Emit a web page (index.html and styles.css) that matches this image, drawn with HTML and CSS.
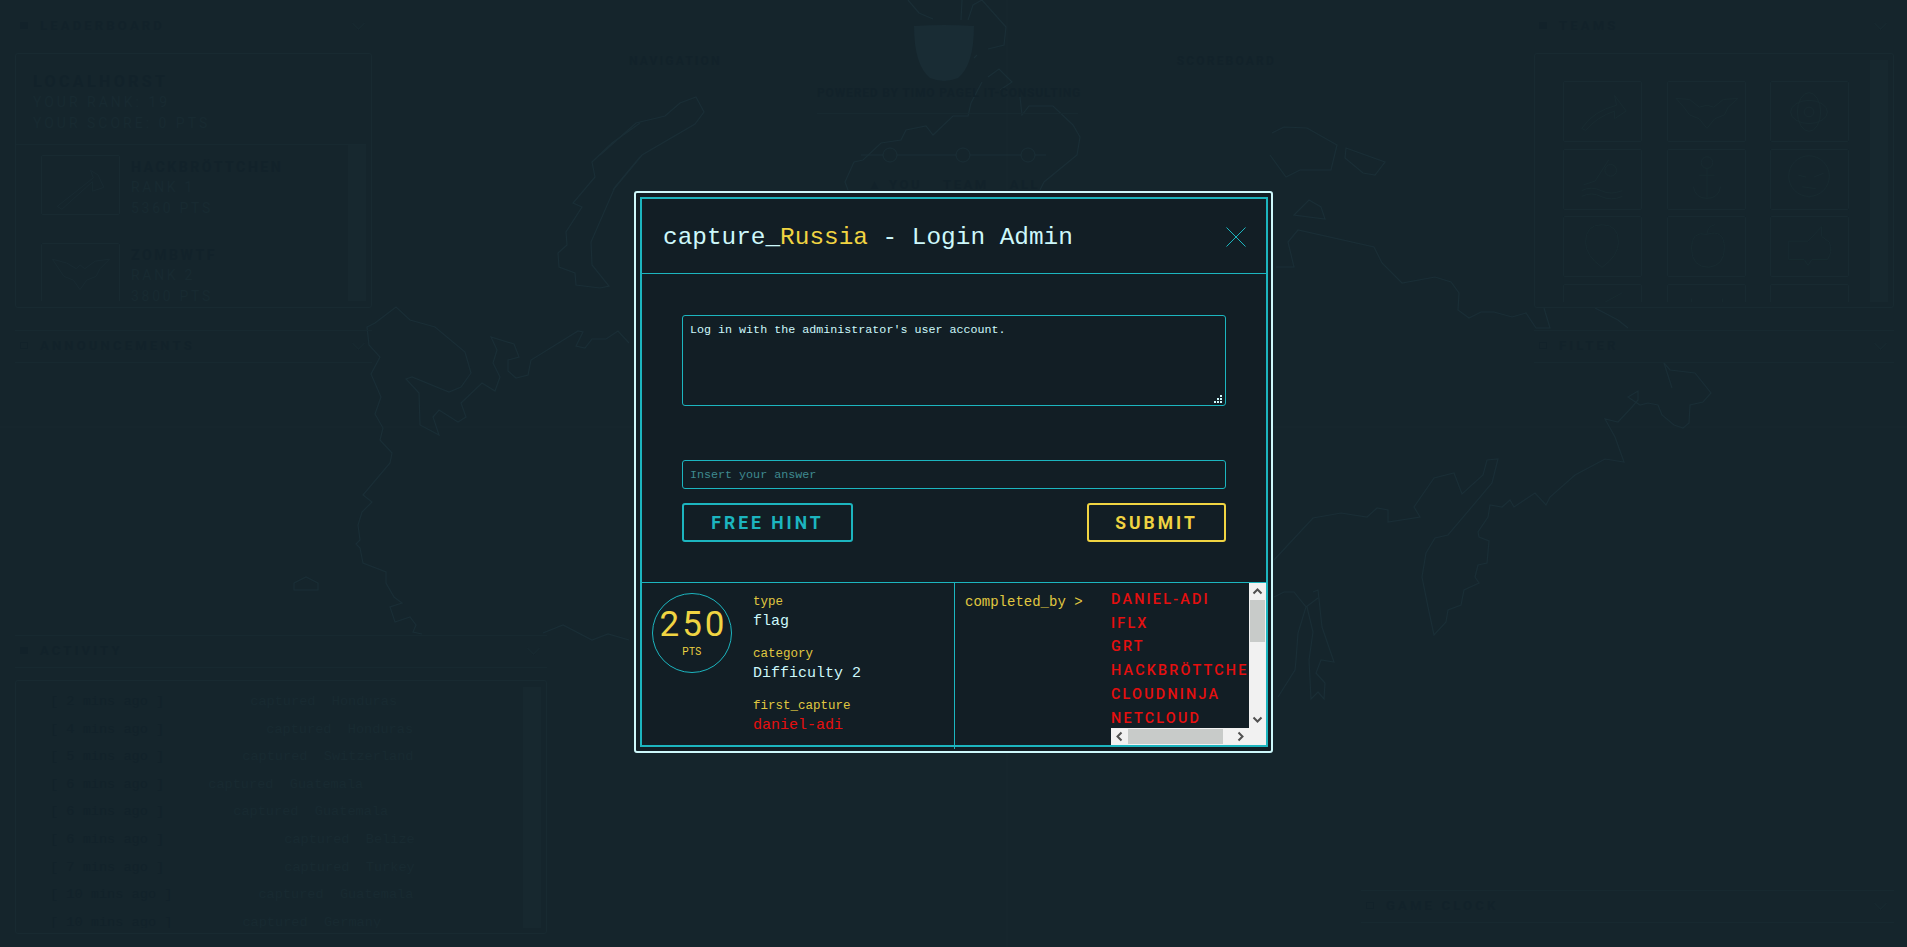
FILE: index.html
```html
<!DOCTYPE html>
<html lang="en">
<head>
<meta charset="utf-8">
<title>capture_Russia - Login Admin</title>
<link rel="stylesheet" href="styles.css">
</head>
<body>
<svg class="map" width="1907" height="947" viewBox="0 0 1907 947" aria-hidden="true">
  <path class="grid-line" d="M0 427H1907M1007 0V947"/>
  <path d="M629 343L618 331L606 339L592 339L585 348L576 346L583 332L578 331L531 360L528 375L516 378L508 371L508 360L519 357L514 344L491 337L497 350L493 363L500 377L495 391L482 383L461 403L466 417L458 422L439 410L433 417L439 435L420 425L419 393L406 379L412 377L449 392L461 387L471 373L465 352L435 327L410 320L396 307L375 323L367 327L369 345L380 357L371 374L381 397L375 414L383 428L380 440L392 453L390 463L363 495L372 502L362 512L358 525L360 540L356 544L360 548L363 563L386 572L386 583L394 597L402 603L390 607L395 622L410 617L416 625L413 632L422 634"/>
  <path d="M294 583L306 577L318 583L318 590L294 590Z"/>
  <path d="M543 633L563 625L592 640L608 634L629 640"/>
  <path d="M640 123L612 143L592 162L595 177L573 203L582 207L566 232L567 245L558 253L559 267L575 273L576 285L600 288L609 286L592 265L591 242L615 187L640 157"/>
  <path d="M600 155L636 123L665 116L680 103L696 97L704 112L695 124L642 155L613 190"/>
  <path d="M908 0L919 13L933 19M962 0L961 20M968 20L973 5L982 0L1006 27L1004 45L988 49M977 55L974 58M988 77L999 69L1012 82L1000 90"/>
  <path d="M982 82L971 103L968 116L953 116L933 135L926 126L906 130L901 140L881 143L863 160L854 162L845 182L848 190"/>
  <path d="M1020 97L1022 115L1029 106L1053 106L1073 125L1080 137L1077 155L1044 182L1040 190"/>
  <path d="M1272 133L1284 127L1307 128L1337 145L1331 170L1300 170L1286 177L1270 155"/>
  <path d="M1346 148L1385 162L1375 175L1363 173L1345 158Z"/>
  <path d="M1294 215L1309 200L1321 207L1325 219Z"/>
  <path d="M1276 267L1294 267L1288 242L1298 230L1374 247L1382 263L1402 283L1435 277L1451 282L1459 293L1458 310L1469 318L1481 312L1494 312L1512 317L1526 313L1536 328L1550 328L1544 308"/>
  <path d="M1595 308L1618 320L1628 328"/>
  <path d="M1664 363L1670 370L1695 373L1711 393L1703 402L1690 405L1689 423L1683 428L1674 425L1662 415L1658 405L1648 403L1640 405L1628 397L1638 391L1638 400L1632 407L1618 422L1605 419L1615 437L1624 462L1605 459L1575 475L1550 497L1546 505L1535 493L1514 507L1510 500L1502 507L1490 505L1488 517L1478 532L1479 537L1489 541L1487 563L1478 565L1475 577L1479 583L1464 590L1461 605L1448 610L1446 622L1434 635L1428 607L1422 577L1426 553L1435 538L1448 535L1492 483L1498 459L1487 460L1483 475L1462 494L1454 473L1434 478L1414 507L1420 517L1388 522L1388 510L1377 508L1367 517L1341 513L1313 518L1274 560"/>
  <path d="M1664 363L1672 388"/>
  <path d="M1274 597L1284 592L1294 592L1306 607L1298 633L1296 660L1295 670L1278 697"/>
  <path d="M1306 607L1318 598M1313 592L1318 590L1322 627L1334 662L1321 660L1316 673L1325 683L1324 699L1318 692L1311 699L1309 660L1313 632L1307 607"/>
</svg>

<div class="page">
  <div class="col-left">
    <div class="head head-first"><span class="mark"></span><span class="head-title">LEADERBOARD</span><span class="chev"></span></div>
    <div class="box box-lead">
      <div class="me">
        <div class="me-title">LOCALHORST</div>
        <div class="dim dim-score">YOUR RANK: 19</div>
        <div class="dim dim-score">YOUR SCORE: 0 PTS</div>
      </div>
      <div class="lead-list">
        <div class="lead-rows">
          <div class="lead-row">
            <div class="tile"><svg viewBox="0 0 79 61"><path d="M15 53L53 23L50 15L58 20L64 33L52 37L52 27L20 56Z"/></svg></div>
            <div><div class="me-name">HACKBRÖTTCHEN</div><div class="dim">RANK 1</div><div class="dim">5360 PTS</div></div>
          </div>
          <div class="lead-row">
            <div class="tile"><svg viewBox="0 0 79 61"><path d="M10 16L25 20L35 26L39 22L44 26L55 18L70 16L60 26L56 34L46 38L39 48L32 38L22 34Z"/></svg></div>
            <div><div class="me-name">ZOMBWTF</div><div class="dim">RANK 2</div><div class="dim">3800 PTS</div></div>
          </div>
        </div>
        <div class="track"></div>
      </div>
    </div>
    <div class="head head-lined"><span class="mark mark-open"></span><span class="head-title">ANNOUNCEMENTS</span><span class="chev"></span></div>
    <div class="head head-lined head-activity"><span class="mark"></span><span class="head-title">ACTIVITY</span><span class="chev"></span></div>
    <div class="box box-activity">
      <div class="act-rows">
        <div class="act-row"><span class="act-time">[ 2 mins ago ]</span><span class="act-who" style="width:86px"></span><span>captured&nbsp;&nbsp;Honduras</span></div>
        <div class="act-row"><span class="act-time">[ 4 mins ago ]</span><span class="act-who" style="width:102px"></span><span>captured&nbsp;&nbsp;Honduras</span></div>
        <div class="act-row"><span class="act-time">[ 5 mins ago ]</span><span class="act-who" style="width:78px"></span><span>captured&nbsp;&nbsp;Switzerland</span></div>
        <div class="act-row"><span class="act-time">[ 6 mins ago ]</span><span class="act-who" style="width:44px"></span><span>captured&nbsp;&nbsp;Guatemala</span></div>
        <div class="act-row"><span class="act-time">[ 6 mins ago ]</span><span class="act-who" style="width:69px"></span><span>captured&nbsp;&nbsp;Guatemala</span></div>
        <div class="act-row"><span class="act-time">[ 6 mins ago ]</span><span class="act-who" style="width:120px"></span><span>captured&nbsp;&nbsp;Belize</span></div>
        <div class="act-row"><span class="act-time">[ 7 mins ago ]</span><span class="act-who" style="width:120px"></span><span>captured&nbsp;&nbsp;Turkey</span></div>
        <div class="act-row"><span class="act-time">[ 10 mins ago ]</span><span class="act-who" style="width:86px"></span><span>captured&nbsp;&nbsp;Guatemala</span></div>
        <div class="act-row"><span class="act-time">[ 10 mins ago ]</span><span class="act-who" style="width:70px"></span><span>captured&nbsp;&nbsp;Germany</span></div>
      </div>
      <div class="track"></div>
    </div>
  </div>

  <div class="col-center">
    <div class="brand">
      <span class="brand-link">NAVIGATION</span>
      <svg class="shield" viewBox="0 0 60 57" aria-hidden="true"><path d="M0 1Q30 -1 60 1Q60 40 44 53Q30 59 16 53Q0 40 0 1Z"/></svg>
      <span class="brand-link">SCOREBOARD</span>
    </div>
    <div class="powered">POWERED BY TIMO PAGEL IT-CONSULTING</div>
    <div class="view-switch">
      <svg class="slider" viewBox="0 0 261 20" aria-hidden="true"><path d="M44 10H66M80 10H139M153 10H204M218 10H229"/><ellipse cx="73" cy="10" rx="7" ry="7"/><ellipse cx="146" cy="10" rx="7" ry="7"/><ellipse cx="211" cy="10" rx="7" ry="7"/></svg>
      <div class="switch-labels"><span>▲ YOU</span><span>TEAM</span><span>ALL</span></div>
    </div>
  </div>

  <div class="col-right">
    <div class="right-top">
      <div class="head head-first"><span class="mark"></span><span class="head-title">TEAMS</span><span class="chev"></span></div>
      <div class="box box-teams">
        <div class="team-grid">
          <div class="tile"><svg viewBox="0 0 79 61"><path d="M18 48Q30 30 54 24L52 14L64 30L52 38L52 30Q34 36 22 50Z"/></svg></div>
          <div class="tile"><svg viewBox="0 0 79 61"><path d="M8 17L22 18L32 26L40 24L47 26L57 18L72 17L62 26L58 34L48 38L40 48L32 38L22 34L16 26Z"/></svg></div>
          <div class="tile"><svg viewBox="0 0 79 61"><circle cx="39" cy="31" r="5"/><ellipse cx="39" cy="31" rx="19" ry="12"/><ellipse cx="39" cy="31" rx="12" ry="20"/></svg></div>
          <div class="tile"><svg viewBox="0 0 79 61"><circle cx="48" cy="21" r="6"/><path d="M20 36L32 32L46 10M18 42Q28 37 38 42T60 42M18 48Q28 43 38 48T60 48"/></svg></div>
          <div class="tile"><svg viewBox="0 0 79 61"><circle cx="40" cy="13" r="6"/><path d="M40 19V50M32 26H48M26 38Q28 50 40 50Q52 50 54 38"/></svg></div>
          <div class="tile"><svg viewBox="0 0 79 61"><circle cx="39" cy="27" r="21"/><path d="M28 26L36 28M44 28L54 24M32 38L46 40M39 48V50"/></svg></div>
          <div class="tile"><svg viewBox="0 0 79 61"><path d="M39 8Q56 8 56 26Q56 40 39 52Q22 40 22 26Q22 8 39 8Z"/></svg></div>
          <div class="tile"><svg viewBox="0 0 79 61"><path d="M40 18Q58 12 58 32Q58 50 42 52Q24 52 24 32Q24 14 40 18ZM40 18Q40 10 48 8"/></svg></div>
          <div class="tile"><svg viewBox="0 0 79 61"><path d="M18 25H38L52 10V20L60 26Q64 36 58 44H42L38 50L34 44H18Z"/></svg></div>
          <div class="tile"><svg viewBox="0 0 79 61"><path d="M38 20L60 8"/></svg></div>
          <div class="tile"><svg viewBox="0 0 79 61"><path d="M24 14V24M56 14V24"/></svg></div>
          <div class="tile"></div>
        </div>
        <div class="track"></div>
      </div>
      <div class="head head-lined"><span class="mark mark-open"></span><span class="head-title">FILTER</span><span class="chev"></span></div>
    </div>
    <div class="head head-lined head-clock"><span class="mark mark-open"></span><span class="head-title">GAME CLOCK</span><span class="chev"></span></div>
  </div>
</div>

<div class="overlay">
  <div class="modal">
    <div class="modal-inner">
      <header class="modal-head">
        <h1 class="modal-title">capture_<span class="accent">Russia</span> - Login Admin</h1>
        <svg class="close" viewBox="0 0 20 20" aria-label="close"><path d="M0.5 0.5L19.5 19.5M19.5 0.5L0.5 19.5"/></svg>
      </header>
      <div class="modal-body">
        <div class="desc-wrap">
          <textarea class="desc" readonly>Log in with the administrator's user account.</textarea>
          <svg class="grip" viewBox="0 0 8 8" aria-hidden="true"><path d="M6 0h2v2H6zM3 3h2v2H3zM6 3h2v2H6zM0 6h2v2H0zM3 6h2v2H3zM6 6h2v2H6z"/></svg>
        </div>
        <input class="answer" type="text" placeholder="Insert your answer">
        <div class="actions">
          <button class="btn btn-hint" type="button">FREE HINT</button>
          <button class="btn btn-submit" type="button">SUBMIT</button>
        </div>
      </div>
      <footer class="modal-foot">
        <div class="foot-left">
          <div class="points"><span class="points-num">250</span><span class="points-unit">PTS</span></div>
          <dl class="facts">
            <div class="fact"><dt>type</dt><dd>flag</dd></div>
            <div class="fact"><dt>category</dt><dd>Difficulty 2</dd></div>
            <div class="fact"><dt>first_capture</dt><dd class="red">daniel-adi</dd></div>
          </dl>
        </div>
        <div class="foot-right">
          <div class="completed">completed_by &gt;</div>
          <div class="scroller">
            <ul class="teams-done">
              <li>DANIEL-ADI</li>
              <li>IFLX</li>
              <li>GRT</li>
              <li>HACKBRÖTTCHEN</li>
              <li>CLOUDNINJA</li>
              <li>NETCLOUD</li>
              <li>ZOMBWTF</li>
            </ul>
            <div class="vbar">
              <svg class="arrow" viewBox="0 0 17 17"><path d="M4.5 10.5L8.5 6.5L12.5 10.5"/></svg>
              <div class="vtrack"><div class="vthumb"></div></div>
              <svg class="arrow" viewBox="0 0 17 17"><path d="M4.5 6.5L8.5 10.5L12.5 6.5"/></svg>
            </div>
            <div class="hbar">
              <svg class="arrow" viewBox="0 0 17 17"><path d="M10.5 4.5L6.5 8.5L10.5 12.5"/></svg>
              <div class="htrack"><div class="hthumb"></div></div>
              <svg class="arrow" viewBox="0 0 17 17"><path d="M6.5 4.5L10.5 8.5L6.5 12.5"/></svg>
            </div>
            <div class="corner"></div>
          </div>
        </div>
      </footer>
    </div>
  </div>
</div>
</body>
</html>
```
FILE: styles.css
```css
* { box-sizing: border-box; }
html, body { height: 100%; }
body {
  margin: 0;
  height: 947px;
  overflow: hidden;
  background: #15252c;
  font-family: "Liberation Mono", "DejaVu Sans Mono", monospace;
}

/* faded backdrop */
.map {
  position: absolute;
  inset: 0;
  fill: none;
  stroke: #1a2e36;
  stroke-width: 1.2;
}
.map .grid-line { stroke: #18292f; stroke-width: 1; }
.page {
  position: relative;
  display: grid;
  grid-template-columns: 547px 799px 533px;
  height: 947px;
  padding: 0 13px 0 15px;
  color: #12222a;
  font-family: Roboto, "Liberation Sans", sans-serif;
}
.col-left { width: 532px; }
.head {
  display: flex;
  align-items: center;
  width: 357px;
  padding: 0 5px;
}
.head-first { height: 53px; padding-bottom: 3px; }
.head-lined {
  height: 33px;
  padding-bottom: 2px;
  border-top: 1px solid #172930;
  border-bottom: 1px solid #172930;
}
.mark { width: 8px; height: 7px; margin-right: 12px; background: #12222a; }
.mark-open { background: none; border: 1px solid #12222a; }
.head-title { flex: 1; font-size: 13px; font-weight: 700; letter-spacing: 3.2px; }
.chev {
  width: 9px;
  height: 9px;
  margin: 0 4px 4px 0;
  border-right: 1px solid #182a31;
  border-bottom: 1px solid #182a31;
  transform: rotate(45deg);
}
.box {
  border: 1px solid #182a31;
  border-radius: 3px;
  display: flex;
  overflow: hidden;
}
.box-lead { flex-direction: column; width: 357px; height: 255px; margin-bottom: 22px; padding: 0 5px 6px 0; }
.me { height: 91px; flex: none; padding: 18px 0 0 17px; border-bottom: 1px solid #172930; }
.me-title { font-size: 16px; font-weight: 700; letter-spacing: 3.4px; line-height: 20px; }
.me-name { font-size: 14px; font-weight: 700; letter-spacing: 2.6px; line-height: 20px; }
.dim { color: #182a31; font-size: 14px; letter-spacing: 2.7px; line-height: 21px; }
.dim-score { letter-spacing: 3px; }
.lead-list { display: flex; flex: 1; min-height: 0; }
.lead-rows { flex: 1; overflow: hidden; padding: 10px 0 0 25px; }
.lead-row { display: flex; gap: 11px; height: 88px; }
.lead-row .me-name { margin-top: 2px; }
.tile { width: 79px; height: 60px; flex: none; border: 1px solid #182a31; border-radius: 2px; }
.tile svg { display: block; width: 100%; height: 100%; fill: none; stroke: #182a31; stroke-width: 1; }
.track { width: 18px; flex: none; background: #17282f; }
.head-activity { width: 532px; margin-top: 272px; }
.box-activity { width: 532px; height: 254px; margin-top: 12px; padding: 6px 5px 5px 0; }
.act-rows {
  flex: 1;
  overflow: hidden;
  padding: 5px 0 0 34px;
  font-family: "Liberation Mono", monospace;
  font-size: 13.6px;
  color: #182a31;
}
.act-row { display: flex; height: 27.6px; line-height: 20px; white-space: nowrap; }
.act-who { flex: none; }
.act-time { color: #12222a; }

.col-center { display: flex; flex-direction: column; align-items: flex-start; }
.brand { display: flex; justify-content: space-between; align-items: flex-start; width: 647px; padding-top: 25px; margin-left: 67px; }
.brand-link { margin-top: 29px; font-size: 12px; font-weight: 700; letter-spacing: 2.2px; }
.shield { width: 60px; height: 57px; margin-left: -10px; fill: #192c34; }
.powered {
  width: 261px;
  margin: 3px 0 0 255px;
  padding-bottom: 11px;
  border-bottom: 1px solid #172930;
  font-size: 12px;
  font-weight: 700;
  letter-spacing: 0.85px;
  white-space: nowrap;
  line-height: 17px;
}
.view-switch { width: 261px; margin: 31px 0 0 255px; }
.slider { display: block; width: 261px; height: 20px; fill: none; stroke: #1a2e36; stroke-width: 1; }
.switch-labels { display: flex; justify-content: space-between; margin-top: 12px; padding: 0 38px 0 51px; font-size: 13px; font-weight: 700; letter-spacing: 2.5px; }

.col-right { display: flex; flex-direction: column; align-items: stretch; }
.right-top { align-self: flex-end; width: 360px; }
.right-top .head { width: 360px; }
.box-teams { width: 360px; height: 255px; margin-bottom: 22px; padding: 6px 5px 5px 0; }
.team-grid {
  flex: 1;
  overflow: hidden;
  display: grid;
  grid-template-columns: repeat(3, 79px);
  grid-auto-rows: 61px;
  gap: 6.7px 24.5px;
  padding: 21px 0 0 28px;
  align-content: start;
}
.team-grid .tile { height: 61px; }
.head-clock { width: 533px; margin-top: 527px; }

/* modal */
.overlay {
  position: fixed;
  inset: 0;
  display: flex;
  align-items: center;
  justify-content: center;
  padding-bottom: 3px;
}
.modal {
  width: 639px;
  height: 562px;
  padding: 4px 3px 4px 4px;
  background: #121e25;
  border: 2px solid #cdf8fb;
  border-radius: 3px;
}
.modal-inner {
  display: flex;
  flex-direction: column;
  height: 100%;
  border: 2px solid #1cb5bf;
  background: #121e25;
}
.modal-head {
  display: flex;
  align-items: center;
  justify-content: space-between;
  flex: none;
  height: 75px;
  padding: 2px 20px 0 21px;
  border-bottom: 1px solid #1cb5bf;
}
.modal-title {
  margin: 0;
  font-size: 24.4px;
  font-weight: 400;
  color: #cdf8fb;
  white-space: nowrap;
}
.accent { color: #f0d442; }
.close { width: 20px; height: 20px; fill: none; stroke: #1cb5bf; stroke-width: 1; }
.modal-body { flex: 1; padding: 41px 40px 0; }
.desc-wrap { position: relative; height: 91px; }
.desc {
  display: block;
  width: 100%;
  height: 100%;
  resize: none;
  padding: 6px 7px;
  background: transparent;
  border: 1px solid #1cb5bf;
  border-radius: 3px;
  outline: 0;
  color: #cdf8fb;
  font: 11.7px/16px "Liberation Mono", monospace;
}
.grip { position: absolute; right: 4px; bottom: 3px; width: 8px; height: 8px; fill: #cdf8fb; }
.answer {
  display: block;
  width: 100%;
  height: 29px;
  margin-top: 54px;
  padding: 0 7px;
  background: transparent;
  border: 1px solid #1cb5bf;
  border-radius: 3px;
  outline: 0;
  color: #cdf8fb;
  font: 11.7px "Liberation Mono", monospace;
}
.answer::placeholder { color: #3f8a90; opacity: 1; }
.actions { display: flex; justify-content: space-between; margin-top: 14px; }
.btn {
  height: 39px;
  padding: 0;
  background: transparent;
  border: 2px solid;
  border-radius: 3px;
  font-family: Roboto, "Liberation Sans", sans-serif;
  font-size: 17.5px;
  font-weight: 700;
  letter-spacing: 3px;
}
.btn-hint { width: 171px; color: #1cb5bf; border-color: #1cb5bf; }
.btn-submit { width: 139px; color: #f0d442; border-color: #f0d442; }
.modal-foot {
  display: grid;
  grid-template-columns: 313px 1fr;
  flex: none;
  height: 163px;
  border-top: 1px solid #1cb5bf;
}
.foot-left { display: flex; padding: 10px 0 0 10px; border-right: 1px solid #1cb5bf; }
.points {
  display: flex;
  flex-direction: column;
  align-items: center;
  flex: none;
  width: 80px;
  height: 80px;
  padding-top: 15px;
  border: 1px solid #1cb5bf;
  border-radius: 50%;
  color: #f0d442;
}
.points-num { font: 400 35px/32px Roboto, "Liberation Sans", sans-serif; letter-spacing: 3px; margin-right: -3px; white-space: nowrap; }
.points-unit { margin-top: 5px; font: 400 10px/12px Roboto, "Liberation Sans", sans-serif; letter-spacing: 0.4px; }
.facts { margin: 0 0 0 21px; font-size: 12.5px; }
.fact { height: 52px; }
.fact dt { color: #e0c840; line-height: 19px; }
.fact dd { margin: 0; color: #cdf8fb; font-size: 15px; line-height: 20px; }
.fact dd.red { color: #e60f0f; }
.foot-right { display: flex; justify-content: space-between; }
.completed { padding: 11px 0 0 10px; color: #e0c840; font-size: 14px; line-height: 16px; white-space: nowrap; }
.scroller {
  display: grid;
  grid-template-columns: 138px 17px;
  grid-template-rows: 145px 17px;
  width: 155px;
}
.teams-done {
  margin: 0;
  padding: 5px 0 0;
  list-style: none;
  overflow: hidden;
  color: #e60f0f;
  font: 500 14.4px/23.7px Roboto, "Liberation Sans", sans-serif;
  letter-spacing: 2.2px;
  white-space: nowrap;
}
.vbar, .hbar, .corner { background: #f1f1f1; }
.vbar { display: flex; flex-direction: column; }
.hbar { display: flex; }
.arrow { display: block; flex: none; width: 17px; height: 17px; fill: none; stroke: #505050; stroke-width: 2; }
.vtrack { flex: 1; }
.htrack { flex: 1; }
.vthumb { height: 42px; margin: 0 1px; background: #c8cbc9; }
.hthumb { width: 95px; height: 15px; margin: 1px 0; background: #c8cbc9; }
```
